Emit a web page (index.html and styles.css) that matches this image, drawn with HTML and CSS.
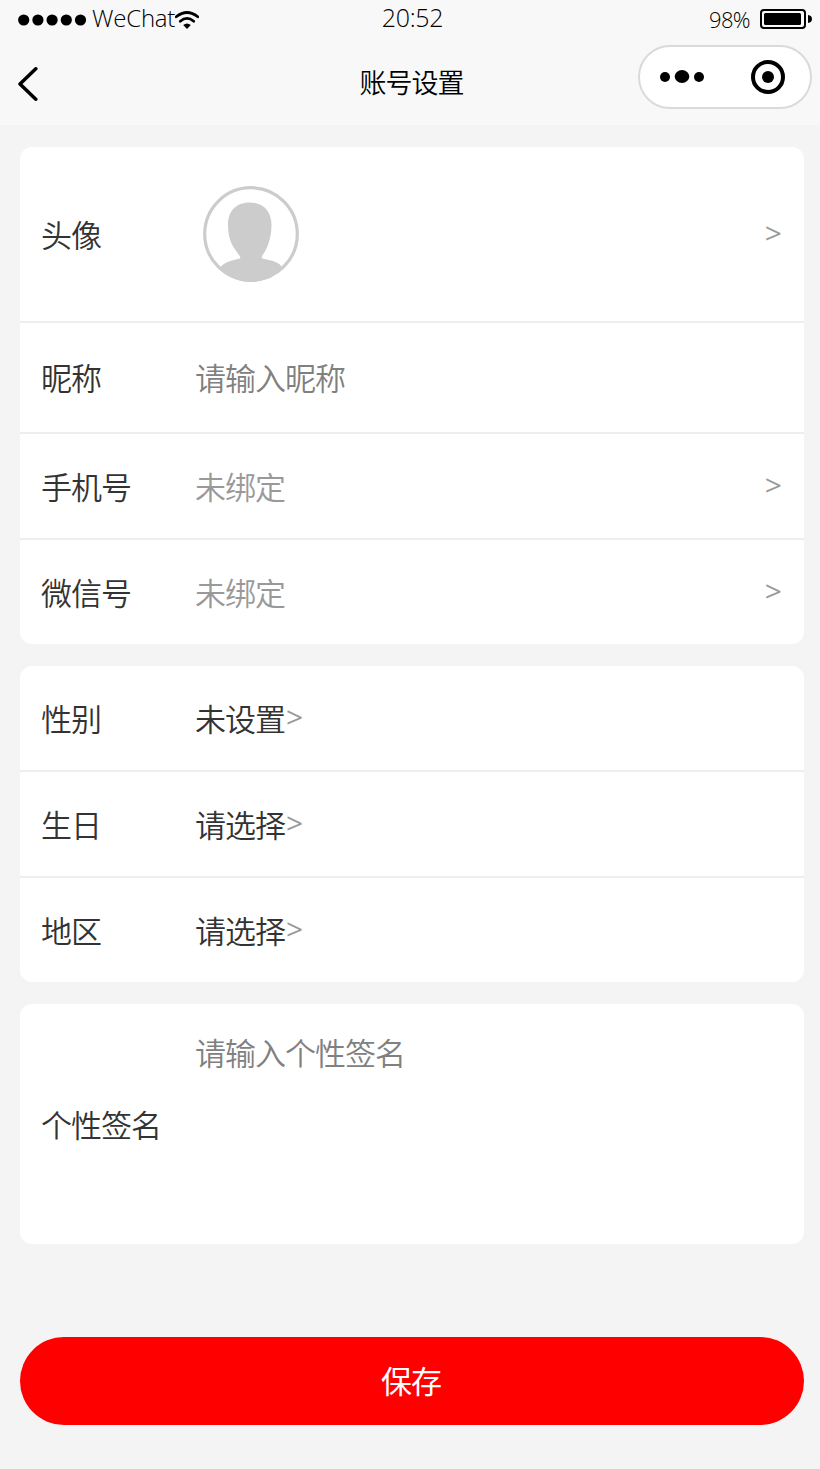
FILE: index.html
```html
<!DOCTYPE html>
<html lang="zh-CN">
<head>
<meta charset="utf-8">
<title>账号设置</title>
<link rel="stylesheet" href="styles.css">
</head>
<body>
<header class="header">
  <div class="status">
    <div class="carrier">
      <svg class="signal" width="70" height="12" viewBox="0 0 70 12"><circle cx="5.700" cy="6" r="5.600"/><circle cx="19.900" cy="6" r="5.600"/><circle cx="34.100" cy="6" r="5.600"/><circle cx="48.300" cy="6" r="5.600"/><circle cx="62.500" cy="6" r="5.600"/></svg>
      <span class="carrier-name">WeChat</span>
      <svg class="wifi" width="24" height="19" viewBox="0 0 24 19"><path d="M1.2 5.8Q12-2.8 22.8 5.8M5.3 10.3Q12 4.6 18.7 10.3" fill="none" stroke="#000" stroke-width="2.7" stroke-linecap="round"/><path d="M8.2 14.1Q12 10.8 15.8 14.1L12 18Z"/></svg>
    </div>
    <span class="time">20:52</span>
    <div class="power">
      <span class="percent">98%</span>
      <svg width="53" height="20" viewBox="0 0 53 20"><rect x="1" y="1" width="44" height="18" rx="3" fill="none" stroke="#000" stroke-width="2"/><rect x="4" y="4" width="37" height="12" rx="1.5"/><path d="M48 6Q52 6.500 52 10T48 14Z"/></svg>
    </div>
  </div>
  <div class="nav">
    <svg class="back" width="20" height="34" viewBox="0 0 20 34"><path d="M17.800 1.800L2 17L17.800 32.200" fill="none" stroke="#000" stroke-width="3.500" stroke-linecap="round" stroke-linejoin="round"/></svg>
    <h1 class="title">账号设置</h1>
    <div class="capsule">
      <svg width="44" height="14" viewBox="0 0 44 14"><circle cx="5" cy="7" r="5"/><ellipse cx="22" cy="6.500" rx="7.300" ry="6.500"/><circle cx="39" cy="7" r="5"/></svg>
      <svg width="34" height="34" viewBox="0 0 34 34"><circle cx="17" cy="17" r="15" fill="none" stroke="#000" stroke-width="4"/><circle cx="17" cy="17" r="6"/></svg>
    </div>
  </div>
</header>
<main class="main">
  <section class="card">
    <div class="row row-avatar">
      <span class="label">头像</span>
      <svg class="avatar" width="96" height="96" viewBox="0 0 96 96"><circle cx="48" cy="48" r="46.300" fill="none" stroke="#ccc" stroke-width="3.200"/><path fill="#ccc" d="M46.500 16.500C60 16.500 68.500 25 68.500 39C68.500 54 63 65 59 70Q58 72 61 73C69 74.500 79 77 78.500 82Q65 96 48 96Q30 96 17.500 82C19 76 32 74 37 72.500Q38 72 36 69C30 61 25 54 25 39C25 25 33 16.500 46.500 16.500Z"/></svg>
      <span class="arrow">&gt;</span>
    </div>
    <div class="row row-name"><span class="label">昵称</span><span class="value placeholder">请输入昵称</span></div>
    <div class="row"><span class="label">手机号</span><span class="value unbound">未绑定</span><span class="arrow">&gt;</span></div>
    <div class="row"><span class="label">微信号</span><span class="value unbound">未绑定</span><span class="arrow">&gt;</span></div>
  </section>
  <section class="card">
    <div class="row"><span class="label">性别</span><span class="value">未设置</span><span class="arrow-inline">&gt;</span></div>
    <div class="row"><span class="label">生日</span><span class="value">请选择</span><span class="arrow-inline">&gt;</span></div>
    <div class="row"><span class="label">地区</span><span class="value">请选择</span><span class="arrow-inline">&gt;</span></div>
  </section>
  <section class="card">
    <div class="row row-signature"><span class="label">个性签名</span><span class="value placeholder">请输入个性签名</span></div>
  </section>
  <button class="save" type="button">保存</button>
</main>
</body>
</html>
```
FILE: styles.css
```css
* { box-sizing: border-box; }
body {
  margin: 0;
  min-height: 1469px;
  background: #f4f4f4;
  color: #333;
  font-family: "Noto Sans CJK SC DemiLight", "Noto Sans CJK SC", sans-serif;
  font-size: 31px;
  font-weight: 350;
  letter-spacing: -1px;
}
svg { display: block; flex: none; }
.header { height: 125px; background: #f8f8f8; color: #000; }
.status {
  display: grid;
  grid-template-columns: 1fr auto 1fr;
  height: 36px;
  padding: 0 7px 0 18px;
  font-family: "Open Sans", "Noto Sans", sans-serif;
  font-size: 24px;
  letter-spacing: 0;
}
.carrier, .power, .time { display: flex; align-items: center; height: 36px; line-height: 36px; }
.signal { margin: 4px 4px 0 0; }
.carrier-name { width: 83px; padding-right: 1px; white-space: nowrap; letter-spacing: -0.2px; }
.wifi { margin-top: 4px; }
.time { padding-bottom: 2px; margin-left: -6px; font-size: 25px; letter-spacing: -0.3px; }
.power { justify-content: flex-end; gap: 10px; }
.power svg { margin-top: 2px; }
.percent { font-size: 22px; padding-top: 2px; letter-spacing: -0.6px; }
.nav {
  display: grid;
  grid-template-columns: 1fr auto 1fr;
  align-items: center;
  height: 89px;
  padding: 0 8px 0 18px;
}
.back { margin-top: 6px; }
.title { margin: 2px 0 0 -7px; font-size: 27px; font-weight: 350; line-height: 40px; }
.capsule {
  display: flex;
  align-items: center;
  justify-content: space-between;
  justify-self: end;
  width: 174px;
  height: 64px;
  margin-top: -7px;
  padding: 0 25px 0 20px;
  border: 2px solid #dadada;
  border-radius: 32px;
  background: #fff;
}
.main { display: flex; flex-direction: column; gap: 22px; padding: 22px 16px 0 20px; }
.card { border-radius: 12px; background: #fff; overflow: hidden; }
.row { display: flex; align-items: center; height: 106px; padding: 0 23px 0 21px; border-bottom: 2px solid #eee; line-height: 44px; }
.row:last-child { height: 104px; border-bottom: 0; }
.row-avatar { height: 176px; }
.row-name { height: 111px; padding-bottom: 2px; }
.label { width: 154px; }
.avatar { margin-left: 8px; }
.placeholder { color: #808080; }
.unbound { color: #999; }
.arrow, .arrow-inline { padding-bottom: 2px; color: #999; font-family: "Open Sans", sans-serif; font-weight: 500; font-size: 30px; }
.arrow { margin-left: auto; }
.arrow-inline { margin-left: 1px; }
.row.row-signature { height: 240px; }
.row-signature .value { align-self: flex-start; margin-top: 26px; }
.save {
  height: 88px;
  margin-top: 71px;
  padding: 0 2px 4px 0;
  border: 0;
  border-radius: 44px;
  background: #f00;
  color: #fff;
  font: 400 31px "Noto Sans CJK SC", sans-serif;
  letter-spacing: -1px;
}
```
